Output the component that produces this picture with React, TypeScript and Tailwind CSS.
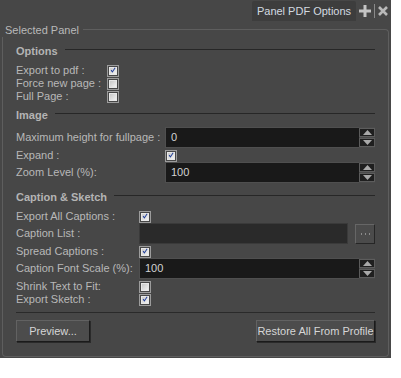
import React from "react";

const font = { fontFamily: '"Liberation Sans", Arial, sans-serif' };

function Check({ checked }: { checked?: boolean }) {
  return (
    <div className="w-[12px] h-[12px] border border-[#9c9c9c] p-px">
      <div className="w-full h-full border border-[#e8e8e8] bg-linear-to-br from-[#c9c9c9] to-[#f2f2f2] flex items-center justify-center">
        {checked && (
          <svg width="10" height="10" viewBox="0 0 10 10" className="-mt-[1px]">
            <path d="M1.8 5.2 L4 8.2 L8.6 1.2" fill="none" stroke="#23409a" strokeWidth="1.7" />
          </svg>
        )}
      </div>
    </div>
  );
}

function Header({ text }: { text: string }) {
  return (
    <div className="flex items-center h-[14px] gap-[7px]">
      <span className="font-bold text-[11px] text-[#b4b4b4] leading-[14px]">{text}</span>
      <div className="flex-1 border-t border-[#272727] -mt-[3px]" />
    </div>
  );
}

function CheckRow({ label, w, checked }: { label: string; w: number; checked?: boolean }) {
  return (
    <div className="flex items-center h-[13px]">
      <span
        className="text-[11px] text-[#b8b8b8] leading-[13px] whitespace-nowrap"
        style={{ width: w }}
      >
        {label}
      </span>
      <Check checked={checked} />
    </div>
  );
}

function Spinner() {
  return (
    <div className="flex flex-col w-[16px] h-[21px] bg-[#4a4a4a] gap-px py-px">
      <div className="flex-1 bg-[#1f1f1f] border border-[#5c5c5c] flex items-center justify-center">
        <svg width="9" height="5" viewBox="0 0 9 5">
          <path d="M0 5 L4.5 0 L9 5 Z" fill="#a9a9a9" />
        </svg>
      </div>
      <div className="flex-1 bg-[#1f1f1f] border border-[#5c5c5c] flex items-center justify-center">
        <svg width="9" height="5" viewBox="0 0 9 5">
          <path d="M0 0 L9 0 L4.5 5 Z" fill="#a9a9a9" />
        </svg>
      </div>
    </div>
  );
}

function NumRow({ label, w, value }: { label: string; w: number; value: string }) {
  return (
    <div className="flex items-center h-[21px]">
      <span
        className="text-[11px] text-[#b8b8b8] leading-[13px] whitespace-nowrap"
        style={{ width: w }}
      >
        {label}
      </span>
      <div className="flex-1 h-[21px] bg-[#191919] border border-[#4f4f4f] border-r-0 flex items-center pl-[5px] text-[11px] text-[#d2d2d2]">
        {value}
      </div>
      <Spinner />
    </div>
  );
}

function Btn({ children, w }: { children: React.ReactNode; w: number }) {
  return (
    <div
      className="h-[22px] bg-[#4c4c4c] border border-t-[#626262] border-l-[#626262] border-b-[#1b1b1b] border-r-[#1b1b1b] shadow-[1px_1px_0_#2a2a2a] flex items-center justify-center text-[11px] text-[#d6d6d6]"
      style={{ width: w }}
    >
      {children}
    </div>
  );
}

export default function App() {
  return (
    <div className="w-[401px] h-[378px] bg-white" style={font}>
      <div className="w-[391px] h-[358px] bg-[#474747] flex flex-col">
        {/* top bar */}
        <div className="h-[21px] flex items-end justify-end pr-[3px]">
          <div className="h-[20px] w-[104px] bg-[#3d3d3d] rounded-t-[2px] flex items-center justify-center text-[11px] text-[#d3dae0]">
            Panel PDF Options
          </div>
          <div className="h-[20px] flex items-center ml-[3px]">
            <svg width="12" height="12" viewBox="0 0 12 12">
              <path d="M4.5 0 H7.5 V4.5 H12 V7.5 H7.5 V12 H4.5 V7.5 H0 V4.5 H4.5 Z" fill="#c4c4c4" />
            </svg>
            <div className="w-px h-[14px] bg-[#8a8a8a] mx-[3px]" />
            <svg width="10" height="10" viewBox="0 0 10 10">
              <path d="M1 1 L9 9 M9 1 L1 9" stroke="#b9b9b9" strokeWidth="2.6" />
            </svg>
          </div>
        </div>

        {/* group box */}
        <div className="pl-[2px] pr-[2px] flex flex-col">
          <div className="flex h-[16px] items-start">
            <span className="text-[11px] text-[#b9b9b9] leading-[14px] pl-[3px] mt-[2px] mr-[4px] whitespace-nowrap">
              Selected Panel
            </span>
            <div className="flex-1 h-[16px] mt-[8px] border-t border-r border-[#5e5e5e] rounded-tr-[4px]" />
          </div>
          <div className="h-[320px] border-l border-r border-b border-[#5e5e5e] rounded-b-[4px] pl-[13px] pr-[13px] flex flex-col">
            <div className="mt-[7px]">
              <Header text="Options" />
            </div>
            <div className="mt-[6px] flex flex-col">
              <CheckRow label="Export to pdf :" w={91} checked />
              <CheckRow label="Force new page :" w={91} />
              <CheckRow label="Full Page :" w={91} />
            </div>
            <div className="mt-[5px]">
              <Header text="Image" />
            </div>
            <div className="mt-[5px] flex flex-col">
              <NumRow label="Maximum height for fullpage :" w={149} value="0" />
              <div className="flex items-center h-[14px] pt-px">
                <span className="w-[149px] text-[11px] text-[#b8b8b8] leading-[13px]">Expand :</span>
                <Check checked />
              </div>
              <NumRow label="Zoom Level (%):" w={149} value="100" />
            </div>
            <div className="mt-[7px]">
              <Header text="Caption & Sketch" />
            </div>
            <div className="mt-[6px] flex flex-col">
              <CheckRow label="Export All Captions :" w={123} checked />
              <div className="flex items-center h-[21px]">
                <span className="w-[123px] text-[11px] text-[#b8b8b8] leading-[13px]">Caption List :</span>
                <div className="flex-1 h-[21px] bg-[#2a2a2a] border border-[#3a3a3a]" />
                <div className="ml-[7px] w-[20px] h-[20px] bg-[#4b4b4b] border border-t-[#666] border-l-[#666] border-b-[#262626] border-r-[#262626] flex items-center justify-center gap-[3px]">
                  <div className="w-px h-[2px] bg-[#8c8c8c]" />
                  <div className="w-px h-[2px] bg-[#8c8c8c]" />
                  <div className="w-px h-[2px] bg-[#8c8c8c]" />
                </div>
              </div>
              <div className="pt-[1px]">
                <CheckRow label="Spread Captions :" w={123} checked />
              </div>
              <NumRow label="Caption Font Scale (%):" w={123} value="100" />
              <div className="pt-[1px]">
                <CheckRow label="Shrink Text to Fit:" w={123} />
              </div>
              <CheckRow label="Export Sketch :" w={123} checked />
            </div>
            <div className="mt-[6px] border-t border-[#2a2a2a]" />
            <div className="mt-[7px] flex justify-between">
              <Btn w={74}>Preview...</Btn>
              <Btn w={119}>Restore All From Profile</Btn>
            </div>
          </div>
        </div>
      </div>
    </div>
  );
}
